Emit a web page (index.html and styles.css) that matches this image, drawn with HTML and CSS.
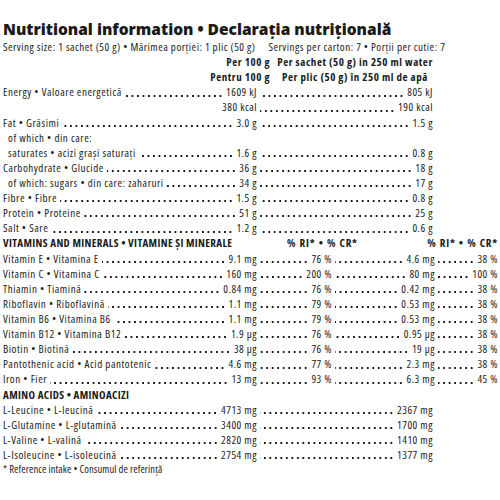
FILE: index.html
```html
<!DOCTYPE html>
<html lang="ro">
<head>
<meta charset="utf-8">
<title>Nutritional information</title>
<link rel="stylesheet" href="styles.css">
</head>
<body>
<div class="label">
  <h1 class="title">Nutritional information • Declaraţia nutriţională</h1>
  <div class="serving"><span>Serving size: 1 sachet (50 g) • Mărimea porţiei: 1 plic (50 g)</span><span>Servings per carton: 7 • Porţii per cutie: 7</span></div>
  <div class="head"><span class="h1">Per 100 g</span><span class="h2">Per sachet (50 g) in 250 ml water</span></div>
  <div class="head"><span class="h1">Pentru 100 g</span><span class="h2">Per plic (50 g) în 250 ml de apă</span></div>

  <div class="row nut"><div class="c"><span class="lbl">Energy • Valoare energetică</span><i class="dots"></i><span class="v">1609 kJ</span></div><div class="c"><i class="dots"></i><span class="v">805 kJ</span></div></div>
  <div class="row nut"><div class="c"><span class="v">380 kcal</span></div><div class="c"><i class="dots"></i><span class="v">190 kcal</span></div></div>
  <div class="row nut"><div class="c"><span class="lbl">Fat • Grăsimi</span><i class="dots"></i><span class="v">3.0 g</span></div><div class="c"><i class="dots"></i><span class="v">1.5 g</span></div></div>
  <div class="row nut"><div class="c"><span class="lbl ind">of which • din care:</span></div></div>
  <div class="row nut"><div class="c"><span class="lbl ind">saturates • acizi graşi saturaţi</span><i class="dots"></i><span class="v">1.6 g</span></div><div class="c"><i class="dots"></i><span class="v">0.8 g</span></div></div>
  <div class="row nut"><div class="c"><span class="lbl">Carbohydrate • Glucide</span><i class="dots"></i><span class="v">36 g</span></div><div class="c"><i class="dots"></i><span class="v">18 g</span></div></div>
  <div class="row nut"><div class="c"><span class="lbl ind">of which: sugars • din care: zaharuri</span><i class="dots"></i><span class="v">34 g</span></div><div class="c"><i class="dots"></i><span class="v">17 g</span></div></div>
  <div class="row nut"><div class="c"><span class="lbl">Fibre • Fibre</span><i class="dots"></i><span class="v">1.5 g</span></div><div class="c"><i class="dots"></i><span class="v">0.8 g</span></div></div>
  <div class="row nut"><div class="c"><span class="lbl">Protein • Proteine</span><i class="dots"></i><span class="v">51 g</span></div><div class="c"><i class="dots"></i><span class="v">25 g</span></div></div>
  <div class="row nut"><div class="c"><span class="lbl">Salt • Sare</span><i class="dots"></i><span class="v">1.2 g</span></div><div class="c"><i class="dots"></i><span class="v">0.6 g</span></div></div>

  <div class="row vhead"><span class="sec">VITAMINS AND MINERALS • VITAMINE ŞI MINERALE</span><span class="pct">% RI* • % CR*</span><span class="pct">% RI* • % CR*</span></div>

  <div class="row vit"><div class="c"><span class="lbl">Vitamin E • Vitamina E</span><i class="dots"></i><span class="v">9.1 mg</span></div><div class="c"><i class="dots"></i><span class="v">76 %</span></div><div class="c"><i class="dots"></i><span class="v">4.6 mg</span></div><div class="c"><i class="dots"></i><span class="v">38 %</span></div></div>
  <div class="row vit"><div class="c"><span class="lbl">Vitamin C • Vitamina C</span><i class="dots"></i><span class="v">160 mg</span></div><div class="c"><i class="dots"></i><span class="v">200 %</span></div><div class="c"><i class="dots"></i><span class="v">80 mg</span></div><div class="c"><i class="dots"></i><span class="v">100 %</span></div></div>
  <div class="row vit"><div class="c"><span class="lbl">Thiamin • Tiamină</span><i class="dots"></i><span class="v">0.84 mg</span></div><div class="c"><i class="dots"></i><span class="v">76 %</span></div><div class="c"><i class="dots"></i><span class="v">0.42 mg</span></div><div class="c"><i class="dots"></i><span class="v">38 %</span></div></div>
  <div class="row vit"><div class="c"><span class="lbl">Riboflavin • Riboflavină</span><i class="dots"></i><span class="v">1.1 mg</span></div><div class="c"><i class="dots"></i><span class="v">79 %</span></div><div class="c"><i class="dots"></i><span class="v">0.53 mg</span></div><div class="c"><i class="dots"></i><span class="v">38 %</span></div></div>
  <div class="row vit"><div class="c"><span class="lbl">Vitamin B6 • Vitamina B6</span><i class="dots"></i><span class="v">1.1 mg</span></div><div class="c"><i class="dots"></i><span class="v">79 %</span></div><div class="c"><i class="dots"></i><span class="v">0.53 mg</span></div><div class="c"><i class="dots"></i><span class="v">38 %</span></div></div>
  <div class="row vit"><div class="c"><span class="lbl">Vitamin B12 • Vitamina B12</span><i class="dots"></i><span class="v">1.9 µg</span></div><div class="c"><i class="dots"></i><span class="v">76 %</span></div><div class="c"><i class="dots"></i><span class="v">0.95 µg</span></div><div class="c"><i class="dots"></i><span class="v">38 %</span></div></div>
  <div class="row vit"><div class="c"><span class="lbl">Biotin • Biotină</span><i class="dots"></i><span class="v">38 µg</span></div><div class="c"><i class="dots"></i><span class="v">76 %</span></div><div class="c"><i class="dots"></i><span class="v">19 µg</span></div><div class="c"><i class="dots"></i><span class="v">38 %</span></div></div>
  <div class="row vit"><div class="c"><span class="lbl">Pantothenic acid • Acid pantotenic</span><i class="dots"></i><span class="v">4.6 mg</span></div><div class="c"><i class="dots"></i><span class="v">77 %</span></div><div class="c"><i class="dots"></i><span class="v">2.3 mg</span></div><div class="c"><i class="dots"></i><span class="v">38 %</span></div></div>
  <div class="row vit"><div class="c"><span class="lbl">Iron • Fier</span><i class="dots"></i><span class="v">13 mg</span></div><div class="c"><i class="dots"></i><span class="v">93 %</span></div><div class="c"><i class="dots"></i><span class="v">6.3 mg</span></div><div class="c"><i class="dots"></i><span class="v">45 %</span></div></div>

  <div class="row"><span class="sec">AMINO ACIDS • AMINOACIZI</span></div>

  <div class="row nut"><div class="c"><span class="lbl">L-Leucine • L-leucină</span><i class="dots"></i><span class="v">4713 mg</span></div><div class="c"><i class="dots"></i><span class="v">2367 mg</span></div></div>
  <div class="row nut"><div class="c"><span class="lbl">L-Glutamine • L-glutamină</span><i class="dots"></i><span class="v">3400 mg</span></div><div class="c"><i class="dots"></i><span class="v">1700 mg</span></div></div>
  <div class="row nut"><div class="c"><span class="lbl">L-Valine • L-valină</span><i class="dots"></i><span class="v">2820 mg</span></div><div class="c"><i class="dots"></i><span class="v">1410 mg</span></div></div>
  <div class="row nut"><div class="c"><span class="lbl">L-Isoleucine • L-isoleucină</span><i class="dots"></i><span class="v">2754 mg</span></div><div class="c"><i class="dots"></i><span class="v">1377 mg</span></div></div>

  <div class="row note">* Reference intake • Consumul de referinţă</div>
</div>
</body>
</html>
```

FILE: styles.css
```css
html, body {
  margin: 0;
  padding: 0;
  background: #ffffff;
}

body {
  color: #1a1a1a;
  font-family: "Open Sans", "DejaVu Sans Condensed", sans-serif;
  font-stretch: 75%;
  font-size: 11px;
  letter-spacing: 0.5px;
}

.label {
  padding: 19px 2px 0 3px;
  width: 495px;
}

.title {
  margin: 0;
  font-family: "Open Sans", "DejaVu Sans", sans-serif;
  font-stretch: 100%;
  font-weight: 800;
  font-size: 15.5px;
  line-height: 20px;
  letter-spacing: 0;
  white-space: nowrap;
}

.serving {
  display: flex;
  gap: 13px;
  line-height: 15.12px;
  white-space: nowrap;
}

.head {
  display: grid;
  grid-template-columns: 267px 170px;
  line-height: 15.12px;
  font-weight: 700;
  letter-spacing: 0.55px;
  white-space: nowrap;
}

.h1 {
  justify-self: end;
}

.h2 {
  justify-self: center;
}

.row {
  height: 15.12px;
  line-height: 15.12px;
  white-space: nowrap;
}

.nut {
  display: grid;
  grid-template-columns: 254px 176px;
}

.vit {
  display: grid;
  grid-template-columns: 254px 75px 103px 63px;
}

.vhead {
  display: grid;
  grid-template-columns: 284px 1fr auto;
}

.c {
  display: flex;
  min-width: 0;
}

.lbl {
  letter-spacing: 0.55px;
}

.lbl.ind {
  padding-left: 5px;
}

.v {
  margin-left: auto;
}

.dots {
  flex: 1;
  margin: 0 3px;
  background-image: radial-gradient(circle, #1a1a1a 0.85px, transparent 1.15px);
  background-size: 5.5px 2.3px;
  background-repeat: repeat-x;
  background-position: right 0 top 10.2px;
}

.sec {
  font-weight: 700;
  letter-spacing: 0.35px;
}

.pct {
  font-weight: 700;
  letter-spacing: 0.8px;
  word-spacing: 0.5px;
}

.note {
  font-size: 10.5px;
  letter-spacing: 0.1px;
}
```
